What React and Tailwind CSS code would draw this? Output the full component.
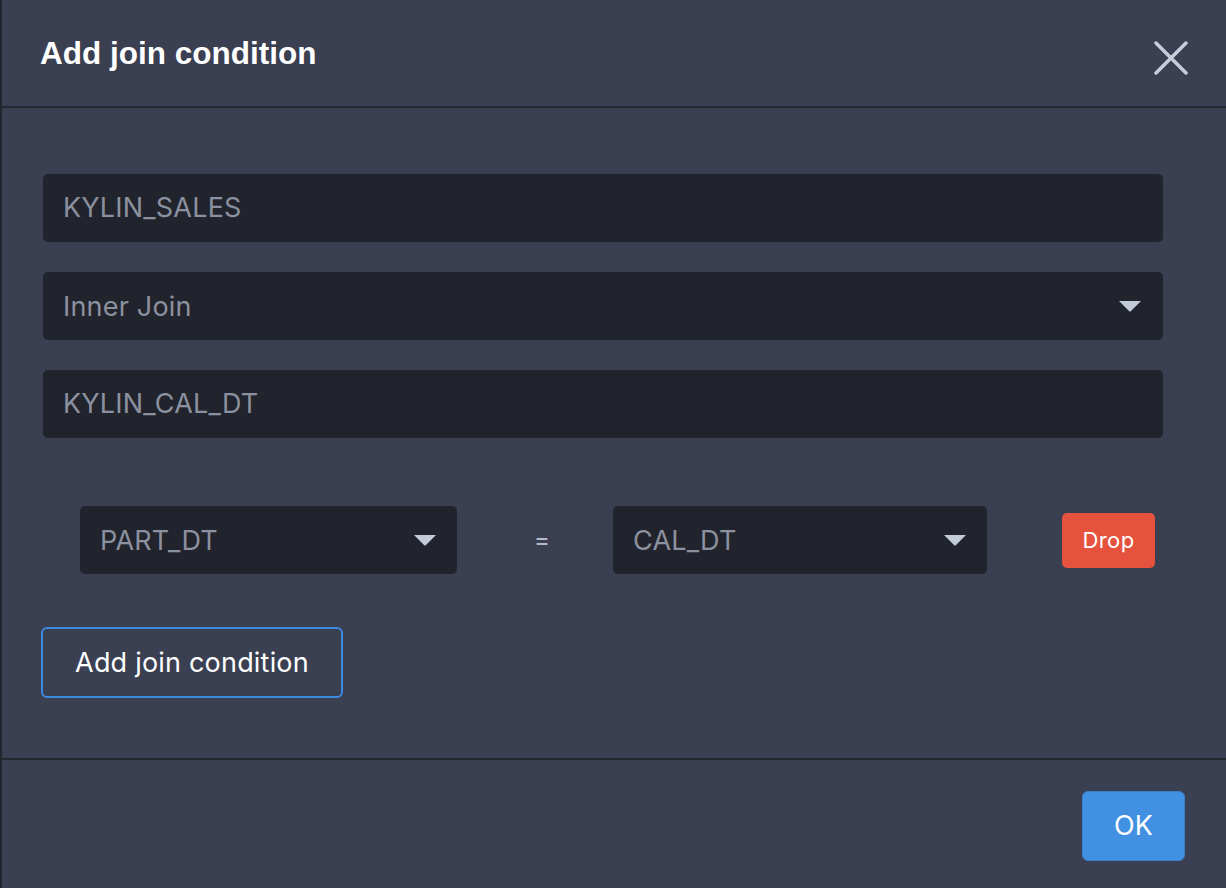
function Caret() {
  return (
    <svg width="24" height="12" viewBox="0 0 24 12" className="shrink-0">
      <path d="M1 1 H23 L13 11 Q12 12 11 11 Z" fill="#c3cbd8" />
    </svg>
  );
}

function CloseIcon() {
  return (
    <svg width="34" height="34" viewBox="0 0 34 34" className="shrink-0 mt-[10px]">
      <path d="M2 2 L32 32 M32 2 L2 32" stroke="#c8ced9" strokeWidth="3.5" strokeLinecap="round" />
    </svg>
  );
}

function TextField({ value }) {
  return (
    <div className="h-[68px] w-full rounded-[5px] bg-[#21242d] px-5 flex items-center text-[27px] tracking-[0.2px] text-[#8c919f]">
      {value}
    </div>
  );
}

function SelectField({ value, className = '' }) {
  return (
    <div
      className={`h-[68px] rounded-[5px] bg-[#21242d] pl-5 pr-5 flex items-center justify-between text-[27px] tracking-[0.2px] text-[#8c919f] ${className}`}
    >
      <span className="pt-[3px]">{value}</span>
      <Caret />
    </div>
  );
}

export default function App() {
  return (
    <div
      className="w-[1226px] h-[888px] bg-[#3a3f51] border-l-2 border-[#22252d] flex flex-col"
      style={{ fontFamily: 'Inter, "Noto Sans", sans-serif' }}
    >
      {/* header */}
      <div className="h-[108px] shrink-0 border-b-2 border-[#262830] flex items-center justify-between pl-[38px] pr-[38px]">
        <h1
          className="text-[31.5px] font-bold text-white pt-[2px]"
          style={{ fontFamily: '"Liberation Sans", Arial, sans-serif' }}
        >
          Add join condition
        </h1>
        <CloseIcon />
      </div>

      {/* body */}
      <div className="flex-1 pt-[66px] pl-[41px] pr-[63px]">
        <div className="flex flex-col gap-[30px]">
          <TextField value="KYLIN_SALES" />
          <SelectField value="Inner Join" className="w-full pr-[21px]" />
          <TextField value="KYLIN_CAL_DT" />
        </div>

        <div className="mt-[68px] flex items-center pl-[37px]">
          <SelectField value="PART_DT" className="w-[377px]" />
          <div className="w-[156px] pl-[14px] text-center text-[24px] text-[#b6bbc9]">=</div>
          <SelectField value="CAL_DT" className="w-[374px]" />
          <button className="ml-[75px] h-[55px] w-[93px] rounded-[5px] bg-[#e5533f] text-white text-[22px] tracking-[0.4px]">
            Drop
          </button>
        </div>

        <button className="mt-[53px] h-[71px] w-[302px] -ml-[2px] rounded-[6px] border-2 border-[#3d8ae0] text-white text-[27px] tracking-[0.2px]">
          <span className="inline-block pt-[2px]">Add join condition</span>
        </button>
      </div>

      {/* footer */}
      <div className="h-[130px] shrink-0 border-t-2 border-[#262830] flex items-start justify-end pt-[31px] pr-[41px]">
        <button className="h-[70px] w-[103px] rounded-[6px] bg-[#4190e2] border border-[#3a7fcc] text-white text-[27px]">
          OK
        </button>
      </div>
    </div>
  );
}
